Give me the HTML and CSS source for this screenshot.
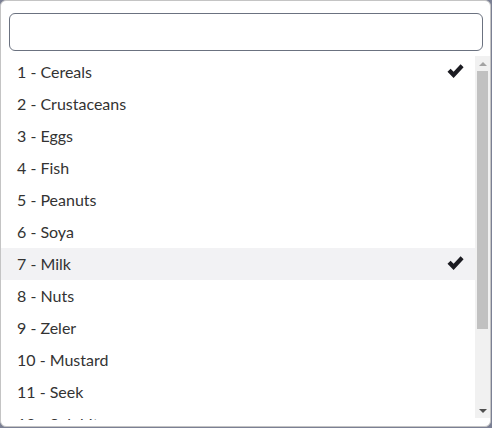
FILE: index.html
```html
<!DOCTYPE html>
<html>
<head>
<meta charset="utf-8">
<link rel="stylesheet" href="styles.css">
</head>
<body>
<div class="panel">
  <div class="search"><input class="search-input" type="text"></div>
  <div class="list-wrap">
    <ul class="list">
      <li class="item"><span class="label">1 - Cereals</span><svg class="check" viewBox="0 0 17 16"><path d="M0.5 8.7 L3.6 5.7 L6.6 8.7 L13.6 1.2 L16.6 4.2 L6.6 15 Z" fill="#1c1c22"/></svg></li>
      <li class="item"><span class="label">2 - Crustaceans</span></li>
      <li class="item"><span class="label">3 - Eggs</span></li>
      <li class="item"><span class="label">4 - Fish</span></li>
      <li class="item"><span class="label">5 - Peanuts</span></li>
      <li class="item"><span class="label">6 - Soya</span></li>
      <li class="item active"><span class="label">7 - Milk</span><svg class="check" viewBox="0 0 17 16"><path d="M0.5 8.7 L3.6 5.7 L6.6 8.7 L13.6 1.2 L16.6 4.2 L6.6 15 Z" fill="#1c1c22"/></svg></li>
      <li class="item"><span class="label">8 - Nuts</span></li>
      <li class="item"><span class="label">9 - Zeler</span></li>
      <li class="item"><span class="label">10 - Mustard</span></li>
      <li class="item"><span class="label">11 - Seek</span></li>
      <li class="item"><span class="label">12 - Sulphites</span></li>
    </ul>
    <div class="scrollbar">
      <div class="arrow up"></div>
      <div class="track"><div class="thumb"></div></div>
      <div class="arrow down"></div>
    </div>
  </div>
</div>
</body>
</html>
```
FILE: styles.css
```css
html, body { margin: 0; padding: 0; }
body {
  width: 492px;
  height: 428px;
  background: #7b8094;
  font-family: Lato, "Open Sans", sans-serif;
  overflow: hidden;
}
.panel {
  box-sizing: border-box;
  width: 491px;
  height: 427px;
  background: #fff;
  border: 1px solid #c4c4c4;
  border-radius: 6px;
  padding: 12px 0 0 0;
  display: flex;
  flex-direction: column;
}
.search { padding: 0 8px; }
.search-input {
  box-sizing: border-box;
  display: block;
  width: 474px;
  height: 38px;
  border: 1px solid #6b7280;
  border-radius: 6px;
  margin: 0;
  outline: none;
}
.list-wrap {
  margin-top: 5px;
  display: flex;
  align-items: flex-start;
}
.list {
  list-style: none;
  margin: 0;
  padding: 0;
  width: 474px;
  height: 364px;
  overflow: hidden;
}
.item {
  height: 32px;
  display: flex;
  align-items: center;
  justify-content: space-between;
  padding: 0 11px 0 16px;
  font-size: 16px;
  color: #333;
}
.label { position: relative; top: -1px; }
.item.active { background: #f2f2f4; }
.check { width: 17px; height: 16px; display: block; position: relative; top: -1px; }
.scrollbar {
  width: 15px;
  height: 362px;
  background: #f1f1f1;
  display: flex;
  flex-direction: column;
}
.arrow { height: 15px; display: flex; align-items: center; justify-content: center; }
.arrow.up::before {
  content: "";
  border-left: 4px solid transparent;
  border-right: 4px solid transparent;
  border-bottom: 4px solid #a3a3a3;
}
.arrow.down::before {
  content: "";
  border-left: 4px solid transparent;
  border-right: 4px solid transparent;
  border-top: 4px solid #505050;
}
.track { flex: 1; padding: 0 2px; }
.thumb { height: 258px; background: #c1c1c1; }
```
